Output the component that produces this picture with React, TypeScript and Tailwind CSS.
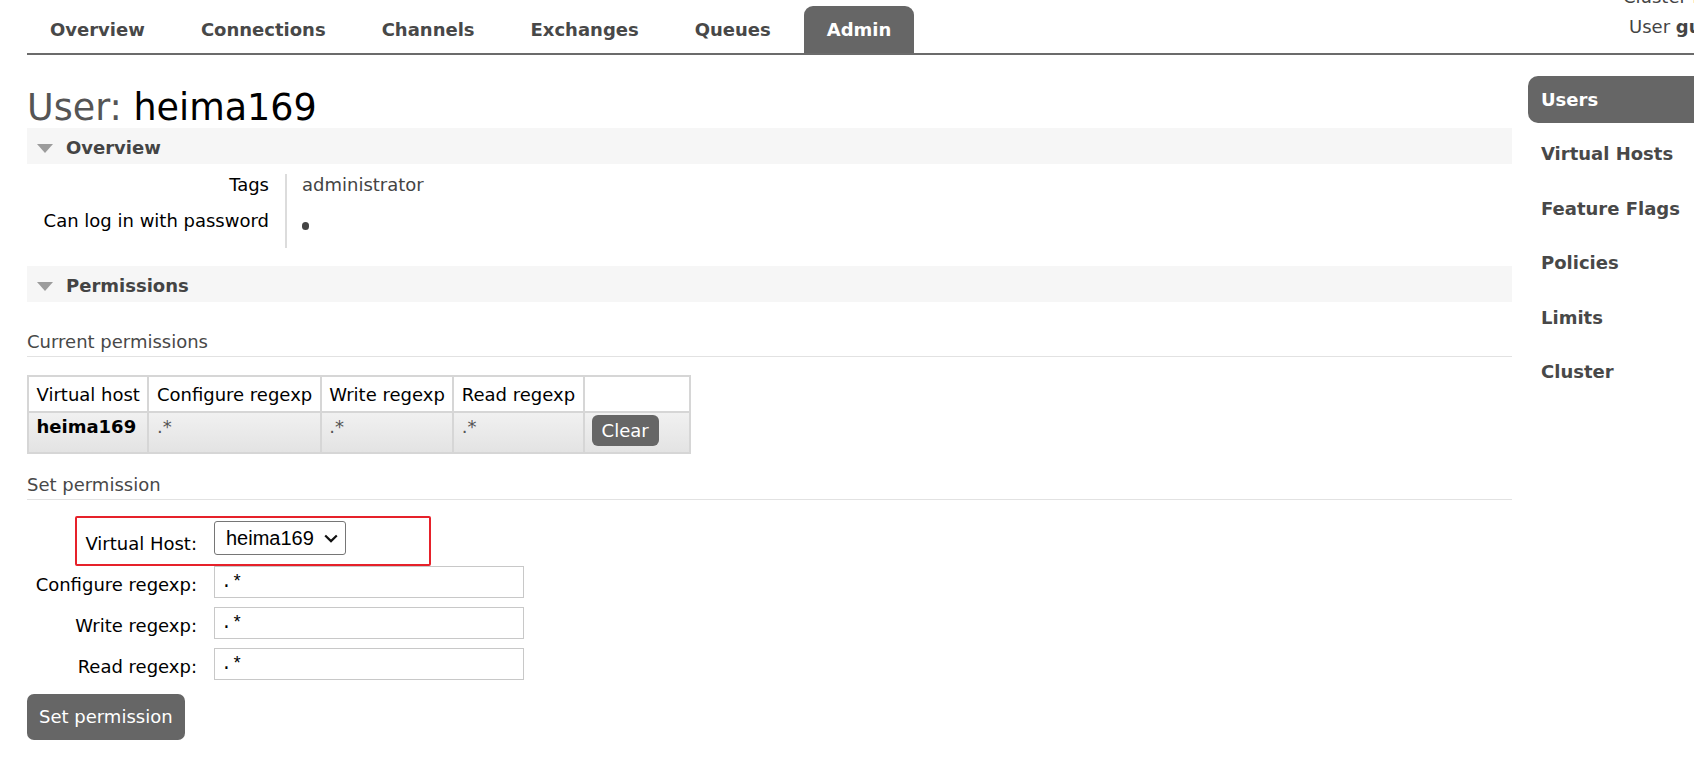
import clsx from "clsx";

const tabs = ["Overview", "Connections", "Channels", "Exchanges", "Queues", "Admin"];
const sideLinks = ["Users", "Virtual Hosts", "Feature Flags", "Policies", "Limits", "Cluster"];

function SectionBar({ title, className }: { title: string; className?: string }) {
  return (
    <div className={clsx("flex h-[36px] items-center gap-[13px] bg-[#f6f6f6] pl-[10px] pt-[4px]", className)}>
      <span className="h-0 w-0 border-x-[8px] border-t-[9px] border-x-transparent border-t-[#9c9c9c]" />
      <span className="font-bold text-[#444]">{title}</span>
    </div>
  );
}

function FormRow({ label, value, className }: { label: string; value: string; className?: string }) {
  return (
    <div className={clsx("flex", className)}>
      <div className="w-[170px] pt-[9px] text-right text-black">{label}</div>
      <div className="ml-[17px] flex h-[32px] w-[310px] items-center border border-[#c8c8c8] pl-[6px] font-['Liberation_Mono',monospace] text-[18px] text-black">
        {value}
      </div>
    </div>
  );
}

export default function App() {
  return (
    <div className="h-[758px] w-[1694px] overflow-hidden bg-white font-['DejaVu_Sans',sans-serif] text-[18px] leading-[20px] text-[#444]">
      <header className="ml-[27px] flex h-[55px] border-b-2 border-[#6b6b6b]">
        <nav className="flex flex-1 items-end gap-[10px]">
          {tabs.map((t) => (
            <a
              key={t}
              className={clsx(
                "flex h-[47px] items-center rounded-t-[9px] px-[23px] font-bold",
                t === "Admin" ? "bg-[#666] text-white" : "text-[#484848]",
              )}
            >
              {t}
            </a>
          ))}
        </nav>
        <div className="w-[71px] shrink-0 overflow-hidden whitespace-nowrap leading-[30px] text-[#444]">
          <div className="mt-[-18px]">
            Cluster <b>rabbit@localhost</b>
          </div>
          <div className="pl-[6px]">
            User <b>guest</b>
          </div>
        </div>
      </header>

      <div className="flex">
        <main className="ml-[27px] w-[1485px] shrink-0">
          <h1 className="mt-[33px] text-[36.5px] leading-[39px]">
            <span className="text-[#555]">User: </span>
            <span className="text-black">heima169</span>
          </h1>

          <SectionBar title="Overview" className="mt-[1px]" />

          <div className="mt-[10px] flex">
            <div className="w-[260px] border-r-2 border-[#dcdcdc] pr-[16px] text-right text-black">
              <div className="h-[37px] pt-[1px]">Tags</div>
              <div className="h-[37px]">Can log in with password</div>
            </div>
            <div className="pl-[15px] text-[#444]">
              <div className="h-[37px] pt-[1px]">administrator</div>
              <div className="h-[37px] pt-[11px]">
                <span className="block h-[8px] w-[7px] rounded-full bg-[#444]" />
              </div>
            </div>
          </div>

          <SectionBar title="Permissions" className="mt-[18px]" />

          <h3 className="mt-[30px] border-b border-[#e2e2e2] pb-[4px] text-[#484848]">Current permissions</h3>

          <table className="mt-[18px] border-collapse">
            <thead>
              <tr>
                {["Virtual host", "Configure regexp", "Write regexp", "Read regexp", ""].map((h, i) => (
                  <th
                    key={i}
                    className={clsx(
                      "border-2 border-[#d6d6d6] px-[7.5px] pb-[6px] pt-[8px] text-left font-normal text-black",
                      i === 4 && "w-[106px]",
                    )}
                  >
                    {h}
                  </th>
                ))}
              </tr>
            </thead>
            <tbody>
              <tr className="bg-gradient-to-b from-[#f1f1f1] to-[#e3e3e3]">
                <td className="border-2 border-[#d6d6d6] px-[7.5px] pt-[4px] align-top font-bold text-black">heima169</td>
                <td className="border-2 border-[#d6d6d6] px-[7.5px] pt-[4px] align-top text-[#555]">.*</td>
                <td className="border-2 border-[#d6d6d6] px-[7.5px] pt-[4px] align-top text-[#555]">.*</td>
                <td className="border-2 border-[#d6d6d6] px-[7.5px] pt-[4px] align-top text-[#555]">.*</td>
                <td className="border-2 border-[#d6d6d6] pb-[6px] pl-[7px] pt-[2px] align-top">
                  <button className="h-[31px] rounded-[6px] bg-[#666] px-[10px] text-white">Clear</button>
                </td>
              </tr>
            </tbody>
          </table>

          <h3 className="mt-[21px] border-b border-[#e2e2e2] pb-[4px] text-[#484848]">Set permission</h3>

          <form className="relative">
            <div className="flex pt-[21px]">
              <div className="w-[170px] pt-[13px] text-right text-black">Virtual Host:</div>
              <div className="ml-[17px] flex h-[34px] w-[132px] items-center justify-between rounded-[3px] border border-[#767676] pl-[11px] pr-[7px] font-['Liberation_Sans',Arial,sans-serif] text-[20px] text-black">
                <span>heima169</span>
                <svg width="14" height="9" viewBox="0 0 14 9" fill="none">
                  <path d="M1.2 1.5l5.8 5.6 5.8-5.6" stroke="#111" strokeWidth="2.2" />
                </svg>
              </div>
            </div>
            <FormRow label="Configure regexp:" value=".*" className="mt-[11px]" />
            <FormRow label="Write regexp:" value=".*" className="mt-[9px]" />
            <FormRow label="Read regexp:" value=".*" className="mt-[9px]" />
            <button
              type="button"
              className="mt-[14px] h-[46px] rounded-[7px] bg-[#666] px-[12px] text-white"
            >
              Set permission
            </button>
            <div className="pointer-events-none absolute left-[48px] top-[16px] h-[50px] w-[356px] rounded-[2px] border-2 border-[#e6212a]" />
          </form>
        </main>

        <aside className="ml-[16px] flex flex-1 flex-col gap-[7.6px] pt-[21px]">
          {sideLinks.map((s) => (
            <a
              key={s}
              className={clsx(
                "flex h-[47px] items-center rounded-l-[10px] pl-[13px] font-bold",
                s === "Users" ? "bg-[#666] text-white" : "text-[#484848]",
              )}
            >
              {s}
            </a>
          ))}
        </aside>
      </div>
    </div>
  );
}
